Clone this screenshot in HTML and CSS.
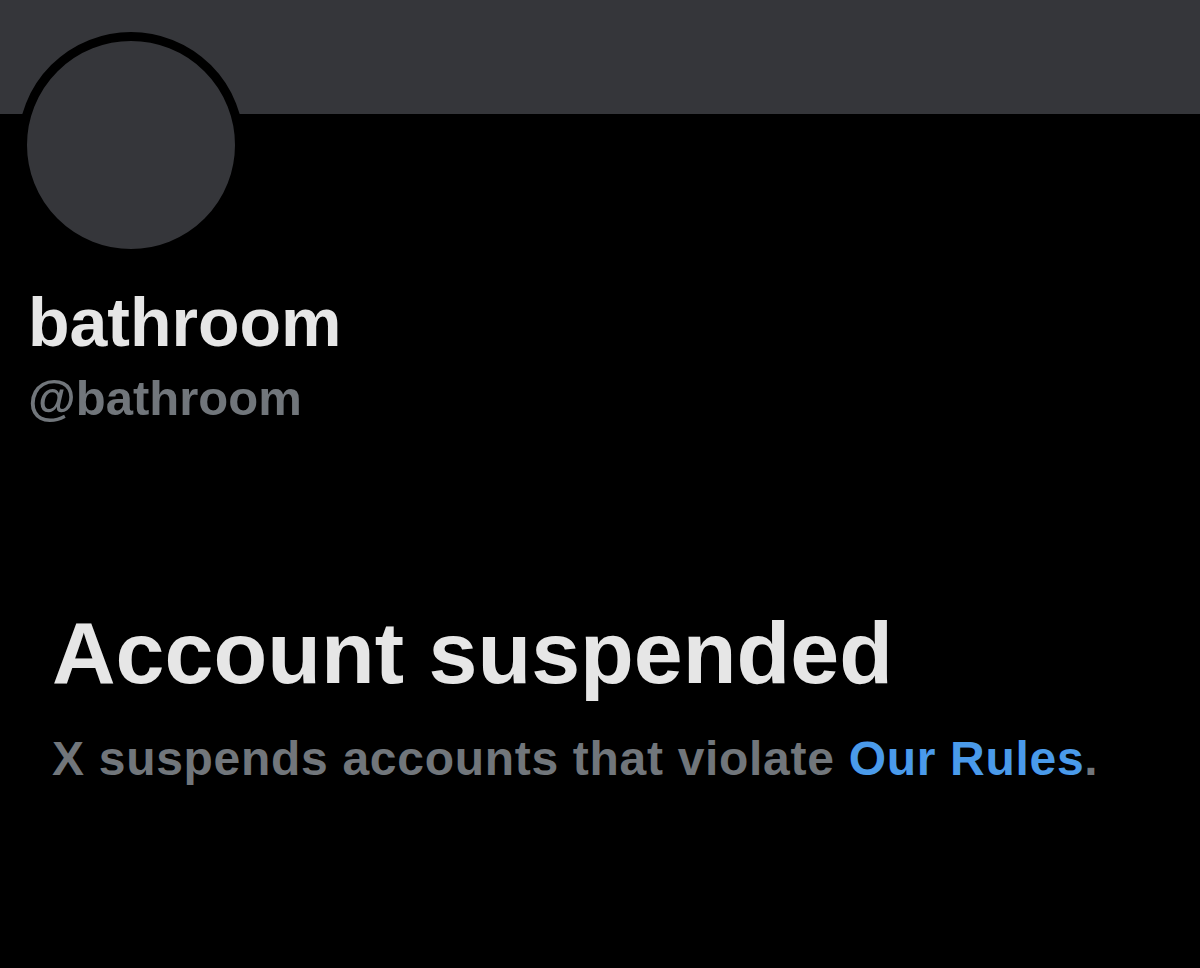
FILE: index.html
```html
<!DOCTYPE html>
<html lang="en">
<head>
  <meta charset="UTF-8">
  <meta name="viewport" content="width=device-width, initial-scale=1.0">
  <title>bathroom (@bathroom) / X</title>
  <link rel="stylesheet" href="styles.css">
</head>
<body>
  <div class="banner"></div>

  <div class="profile">
    <div class="avatar"></div>
    <div class="name">bathroom</div>
    <div class="handle">@bathroom</div>
  </div>

  <div class="notice">
    <h1 class="notice-title">Account suspended</h1>
    <p class="notice-text">X suspends accounts that violate <a href="#" class="rules-link">Our Rules</a>.</p>
  </div>
</body>
</html>
```

FILE: styles.css
```css
/* General */
body {
  margin: 0;
  min-height: 100vh;
  background: #000;
  font-family: 'Liberation Sans', Arial, sans-serif;
  font-weight: bold;
}

/* Header banner */
.banner {
  height: 114px;
  background: #35363a;
}

/* Profile block */
.profile {
  padding: 0 28px;
}

.avatar {
  width: 226px;
  height: 226px;
  margin: -82px 0 0 -10px;
  box-sizing: border-box;
  border: 9px solid #000;
  border-radius: 50%;
  background: #35363a;
}

.name {
  margin-top: 30px;
  font-size: 68px;
  line-height: 1;
  color: #e6e6e6;
}

.handle {
  margin-top: 18px;
  font-size: 49px;
  line-height: 1;
  color: #71767b;
}

/* Suspended notice */
.notice {
  padding: 0 52px;
}

.notice-title {
  margin: 186px 0 0;
  font-size: 88px;
  line-height: 1;
  color: #e6e6e6;
}

.notice-text {
  margin: 38px 0 0;
  font-size: 48px;
  line-height: 1;
  letter-spacing: 0.7px;
  color: #71767b;
}

.rules-link {
  color: #4a9aea;
  text-decoration: none;
}
```
